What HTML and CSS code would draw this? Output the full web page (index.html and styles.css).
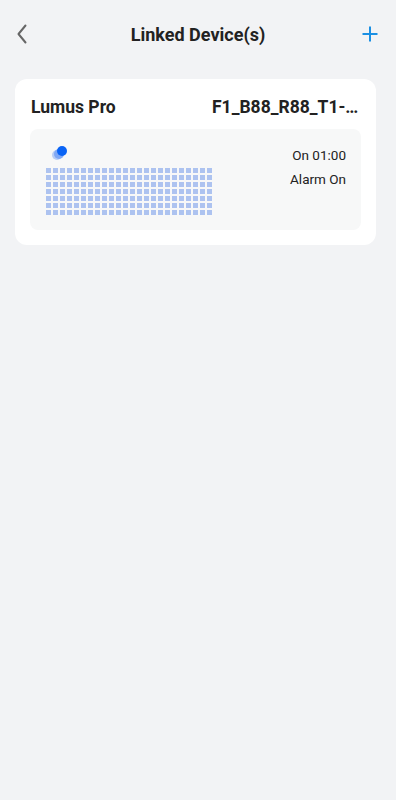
FILE: index.html
```html
<!DOCTYPE html>
<html>
<head>
<meta charset="utf-8">
<link rel="stylesheet" href="styles.css">
</head>
<body>
<div class="nav">
  <svg class="back" width="10" height="20" viewBox="0 0 10 20"><polyline points="8.5,1.5 1.5,10 8.5,18.5" fill="none" stroke="#666" stroke-width="2" stroke-linecap="round" stroke-linejoin="round"/></svg>
  <div class="title">Linked Device(s)</div>
  <svg class="add" width="16" height="16" viewBox="0 0 16 16"><path d="M8 0.5V15.5M0.5 8H15.5" stroke="#1a8fe3" stroke-width="2"/></svg>
</div>
<div class="card">
  <div class="card-head">
    <div class="name">Lumus Pro</div>
    <div class="sn">F1_B88_R88_T1-0001</div>
  </div>
  <div class="panel">
    <div class="left">
      <div class="dots">
        <span class="dot d3"></span>
        <span class="dot d2"></span>
        <span class="dot d1"></span>
      </div>
      <div class="grid" id="grid"></div>
    </div>
    <div class="right">
      <div>On 01:00</div>
      <div>Alarm On</div>
    </div>
  </div>
</div>
<script>
var g=document.getElementById('grid');for(var i=0;i<168;i++){g.appendChild(document.createElement('span'));}
</script>
</body>
</html>
```
FILE: styles.css
```css
html, body { margin: 0; padding: 0; }
body {
  background: #f2f3f5;
  font-family: Roboto, "Liberation Sans", sans-serif;
  color: #222;
  width: 396px;
  min-height: 800px;
}
.nav {
  height: 68px;
  display: flex;
  align-items: center;
  justify-content: space-between;
  padding: 0 18px 0 17px;
  position: relative;
}
.title {
  position: absolute;
  left: 0; right: 0;
  text-align: center;
  font-size: 18px;
  font-weight: 700;
  color: #222;
  pointer-events: none;
}
.back { display: block; }
.add { display: block; }
.card {
  margin: 11px 20px 0 15px;
  background: #fff;
  border-radius: 12px;
  padding: 15px 15px 15px 15px;
}
.card-head {
  display: flex;
  justify-content: space-between;
  align-items: center;
  height: 26px;
  gap: 20px;
}
.name {
  font-size: 17.5px;
  font-weight: 700;
  white-space: nowrap;
  padding-left: 1px;
}
.sn {
  font-size: 17.5px;
  font-weight: 700;
  white-space: nowrap;
  overflow: hidden;
  text-overflow: ellipsis;
  width: 149px;
}
.panel {
  margin-top: 9px;
  background: #f7f8f8;
  border-radius: 8px;
  display: flex;
  justify-content: space-between;
  padding: 14px 15px 15px 16px;
}
.left { padding-top: 3px; }
.dots {
  position: relative;
  width: 20px;
  height: 16px;
  margin-bottom: 6px;
}
.dot {
  position: absolute;
  width: 10px;
  height: 10px;
  border-radius: 50%;
}
.d1 { left: 10.5px; top: 0px; background: #0a64f5; }
.d2 { left: 8px; top: 2.5px; background: #7fa8f5; }
.d3 { left: 6px; top: 3.5px; background: #b8cdf5; }
.grid {
  display: grid;
  grid-template-columns: repeat(24, 5px);
  grid-auto-rows: 5px;
  gap: 2px;
}
.grid span {
  background: #adc3f0;
}
.right {
  text-align: right;
  font-size: 13.5px;
  line-height: 24px;
  color: #222;
}
```
